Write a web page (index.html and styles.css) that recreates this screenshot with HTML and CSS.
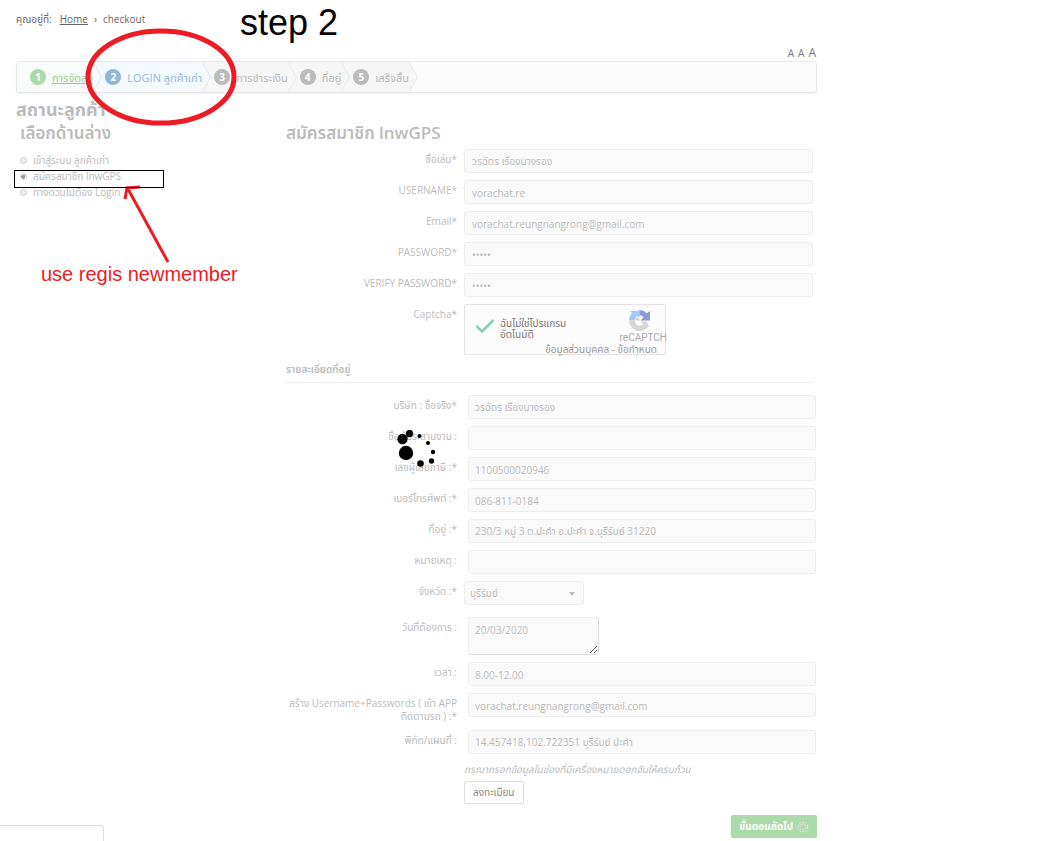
FILE: index.html
```html
<!DOCTYPE html>
<html lang="th">
<head>
  <meta charset="UTF-8" />
  <meta name="viewport" content="width=device-width, initial-scale=1" />
  <title>checkout</title>
  <link rel="stylesheet" href="styles.css">
</head>
<body>
  <div class="page">
    <nav class="breadcrumb">
      <span>คุณอยู่ที่:</span>
      <a href="#">Home</a>
      <span class="sep">›</span>
      <span>checkout</span>
    </nav>

    <div class="font-size">
      <button type="button">A</button>
      <button type="button">A</button>
      <button type="button" class="large">A</button>
    </div>

    <ol class="steps">
      <li class="step done">
        <span class="num">1</span><a href="#">การจัดส่ง</a>
        <svg class="arrow" viewBox="0 0 9 30"><path d="M0 0 8.5 15 0 30" /></svg>
      </li>
      <li class="step active">
        <span class="num">2</span><span>LOGIN ลูกค้าเก่า</span>
        <svg class="arrow" viewBox="0 0 9 30"><path d="M0 0 8.5 15 0 30" /></svg>
      </li>
      <li class="step">
        <span class="num">3</span><span>การชำระเงิน</span>
        <svg class="arrow" viewBox="0 0 9 30"><path d="M0 0 8.5 15 0 30" /></svg>
      </li>
      <li class="step">
        <span class="num">4</span><span>ที่อยู่</span>
        <svg class="arrow" viewBox="0 0 9 30"><path d="M0 0 8.5 15 0 30" /></svg>
      </li>
      <li class="step">
        <span class="num">5</span><span>เสร็จสิ้น</span>
        <svg class="arrow" viewBox="0 0 9 30"><path d="M0 0 8.5 15 0 30" /></svg>
      </li>
    </ol>

    <h1>สถานะลูกค้า</h1>

    <div class="columns">
      <div class="choices">
        <h2>เลือกด้านล่าง</h2>
        <label><input type="radio" name="mode" /> เข้าสู่ระบบ ลูกค้าเก่า</label>
        <label><input type="radio" name="mode" checked /> สมัครสมาชิก lnwGPS</label>
        <label><input type="radio" name="mode" /> ทางด่วนไม่ต้อง Login</label>
      </div>

      <form class="register">
        <h2>สมัครสมาชิก lnwGPS</h2>

        <div class="fields">
          <div class="row">
            <label for="nick">ชื่อเล่น*</label>
            <input type="text" id="nick" value="วรฉัตร เรืองนางรอง" />
          </div>
          <div class="row">
            <label for="user">USERNAME*</label>
            <input type="text" id="user" value="vorachat.re" />
          </div>
          <div class="row">
            <label for="email">Email*</label>
            <input type="text" id="email" value="vorachat.reungnangrong@gmail.com" />
          </div>
          <div class="row">
            <label for="pass">PASSWORD*</label>
            <input type="password" id="pass" value="12345" />
          </div>
          <div class="row">
            <label for="pass2">VERIFY PASSWORD*</label>
            <input type="password" id="pass2" value="12345" />
          </div>
          <div class="row">
            <span class="label">Captcha*</span>
            <div class="captcha">
              <svg class="tick" viewBox="0 0 20 16"><path d="M1.5 8 7 13.5 18.5 2" /></svg>
              <span class="robot">ฉันไม่ใช่โปรแกรมอัตโนมัติ</span>
              <div class="brand">
                <svg viewBox="0 0 20 20">
                  <path fill="#a4c6fb" d="M10 0v7L7 5.5 5 10H0A10 10 0 0 1 3 3L1 1h6z" />
                  <path fill="#8c9ad6" d="M10 0a10 10 0 0 1 7 3l3-2v9h-9l3-3a5 5 0 0 0-4-2z" />
                  <path fill="#d6d6d6" d="M0 10h5.5a5 5 0 0 0 8 4L11 11h6l2 4a10 10 0 0 1-16 2A10 10 0 0 1 0 10z" />
                  <path fill="#d6d6d6" d="m5 10 3-4 3 4z" />
                </svg>
                <span>reCAPTCH</span>
              </div>
              <span class="terms">ข้อมูลส่วนบุคคล - ข้อกำหนด</span>
            </div>
          </div>
        </div>

        <h3>รายละเอียดที่อยู่</h3>

        <div class="fields address">
          <div class="row">
            <label for="company">บริษัท : ชื่อจริง*</label>
            <input type="text" id="company" value="วรฉัตร เรืองนางรอง" />
          </div>
          <div class="row">
            <label for="contact">ชื่อผู้ประสานงาน :</label>
            <input type="text" id="contact" />
          </div>
          <div class="row">
            <label for="tax">เลขผู้เสียภาษี :*</label>
            <input type="text" id="tax" value="1100500020946" />
          </div>
          <div class="row">
            <label for="phone">เบอร์โทรศัพท์ :*</label>
            <input type="text" id="phone" value="086-811-0184" />
          </div>
          <div class="row">
            <label for="addr">ที่อยู่ :*</label>
            <input type="text" id="addr" value="230/3 หมู่ 3 ต.ปะคำ อ.ปะคำ จ.บุรีรัมย์ 31220" />
          </div>
          <div class="row">
            <label for="note">หมายเหตุ :</label>
            <input type="text" id="note" />
          </div>
          <div class="row province">
            <label for="province">จังหวัด :*</label>
            <div class="select">
              <select id="province"><option>บุรีรัมย์</option></select>
            </div>
          </div>
          <div class="row">
            <label for="date">วันที่ต้องการ :</label>
            <textarea id="date">20/03/2020</textarea>
          </div>
          <div class="row">
            <label for="time">เวลา :</label>
            <input type="text" id="time" value="8.00-12.00" />
          </div>
          <div class="row">
            <label for="app">สร้าง Username+Passwords ( เข้า APP ติดตามรถ ) :*</label>
            <input type="text" id="app" value="vorachat.reungnangrong@gmail.com" />
          </div>
          <div class="row">
            <label for="map">พิกัด/แผนที่ :</label>
            <input type="text" id="map" value="14.457418,102.722351 บุรีรัมย์ ปะคำ" />
          </div>
        </div>

        <div class="submit">
          <em>กรุณากรอกข้อมูลในช่องที่มีเครื่องหมายดอกจันให้ครบถ้วน</em>
          <button type="button" class="btn">ลงทะเบียน</button>
        </div>
      </form>
    </div>

    <div class="actions">
      <button type="button" class="next">
        ขั้นตอนถัดไป
        <svg viewBox="0 0 12 12"><circle cx="6" cy="6" r="4.8" /><circle cx="6" cy="6" r="3" /></svg>
      </button>
    </div>

    <!-- loading spinner -->
    <svg class="spinner" viewBox="0 0 40 40">
      <circle cx="9" cy="23" r="7.2" />
      <circle cx="5.5" cy="9" r="5.2" />
      <circle cx="12.5" cy="3.5" r="3.7" />
      <circle cx="22.5" cy="6" r="2" />
      <circle cx="31" cy="13" r="2" />
      <circle cx="36" cy="22" r="2.2" />
      <circle cx="34.5" cy="31" r="2.7" />
      <circle cx="23.5" cy="33.5" r="3.3" />
    </svg>

    <!-- guide marks drawn over the page -->
    <svg class="marks" width="300" height="300" viewBox="0 0 300 300">
      <ellipse cx="161" cy="77" rx="73" ry="46" stroke-width="5" />
      <path d="M168 262 128 189M125 199 127 188 140 187" stroke-width="3" />
      <rect x="14.5" y="170.5" width="149" height="17" />
    </svg>
    <div class="note title">step 2</div>
    <div class="note hint">use regis newmember</div>
  </div>

  <div class="status"></div>
</body>
</html>
```
FILE: styles.css
```css
* {
  box-sizing: border-box;
}
body {
  margin: 0;
  background: #fff;
  color: #bbb;
  font-family: "Open Sans", "Noto Sans", "Noto Sans Thai", sans-serif;
  font-size: 10px;
  line-height: 13px;
}
button, input, select, textarea {
  font: inherit;
  color: inherit;
}
h1, h2, h3 {
  margin: 0;
  font-size: 17px;
  line-height: 24px;
  font-weight: 600;
}
.page {
  position: relative;
  max-width: 817px;
  padding: 13px 0 0 16px;
}

.breadcrumb {
  display: flex;
  align-items: center;
  gap: 6px;
  color: #666;
}
.breadcrumb a {
  color: #666;
  margin-left: 2px;
}
.font-size {
  display: flex;
  justify-content: flex-end;
  align-items: baseline;
  gap: 4px;
  margin-top: 20px;
  padding-right: 1px;
  height: 15px;
}
.font-size button {
  border: 0;
  padding: 0;
  background: none;
  color: #777;
}
.font-size .large {
  font-size: 12px;
}

.steps {
  display: flex;
  margin: 0;
  padding: 0;
  height: 32px;
  list-style: none;
  font-size: 11px;
  border: 1px solid #e8e8e8;
  border-radius: 3px;
  background: #fcfcfc;
  box-shadow: 0 1px 2px #f0f0f0;
}
.step {
  --fill: #f6f6f6;
  position: relative;
  display: flex;
  align-items: center;
  gap: 6px;
  padding-left: 12px;
  background: var(--fill);
  white-space: nowrap;
}
.step.done {
  --fill: #f9fbfb;
  color: #93cf93;
  padding-left: 13px;
}
.step.active {
  --fill: #f4faff;
  color: #92b8d8;
}
.step a {
  color: inherit;
}
.num {
  width: 16px;
  height: 16px;
  font-size: 10px;
  line-height: 16px;
  border-radius: 50%;
  background: #bbb;
  color: #fff;
  font-weight: bold;
  text-align: center;
}
.done .num {
  background: #a9dba9;
}
.active .num {
  background: #92b8d8;
}
.arrow {
  position: absolute;
  z-index: 1;
  left: 100%;
  top: 0;
  width: 9px;
  height: 30px;
  fill: var(--fill);
  stroke: #e8e8e8;
}

h1 {
  margin-top: 4px;
  font-size: 18px;
  font-weight: 700;
}
.columns {
  display: grid;
  grid-template-columns: 270px 1fr;
}
.choices h2 {
  margin: 0 0 7px 4px;
}
.choices label {
  display: flex;
  align-items: center;
  gap: 6px;
  height: 16px;
  padding-left: 4px;
}
.choices input {
  appearance: none;
  width: 7px;
  height: 7px;
  margin: 0;
  border: 1px solid #ccc;
  border-radius: 50%;
  background: #eee;
}
.choices input:checked {
  background: radial-gradient(#999 0 2px, #eee 2px);
}

.fields {
  display: flex;
  flex-direction: column;
  gap: 7px;
  padding: 4px 4px 0 0;
}
.row {
  display: grid;
  grid-template-columns: 171px 1fr;
  column-gap: 7px;
  align-items: start;
}
.row > label, .label {
  padding-top: 4px;
  text-align: right;
}
.row input, select, textarea {
  width: 100%;
  height: 24px;
  padding: 1px 7px 0;
  border: 1px solid #eee;
  border-radius: 3px;
  background: #fafafa;
}
.captcha {
  position: relative;
  display: grid;
  grid-template-columns: 20px 80px;
  gap: 5px;
  width: 202px;
  height: 51px;
  padding: 13px 10px;
  border: 1px solid #e4e4e4;
  border-radius: 2px;
  background: #fcfcfc;
  color: #777;
  line-height: 11px;
}
.tick {
  width: 20px;
  height: 16px;
  fill: none;
  stroke: #86d0ae;
  stroke-width: 2.5;
}
.brand {
  position: absolute;
  right: -2px;
  top: 5px;
  display: flex;
  flex-direction: column;
  align-items: center;
  gap: 1px;
  color: #aaa;
  font-family: Roboto, sans-serif;
}
.brand svg {
  width: 21px;
  height: 21px;
  margin-right: 8px;
}
.terms {
  position: absolute;
  right: 8px;
  bottom: -1px;
  color: #999;
  white-space: nowrap;
}

h3 {
  margin: 2px 4px 0 0;
  padding-bottom: 1px;
  border-bottom: 1px solid #eee;
  font-size: 10px;
}
.address {
  padding: 12px 1px 0 0;
}
.address .row > input, .address textarea {
  justify-self: end;
  width: calc(100% - 4px);
  padding-left: 6px;
}
.select {
  position: relative;
  width: 120px;
}
.select::after {
  content: "";
  position: absolute;
  right: 9px;
  top: 11px;
  border: 3px solid transparent;
  border-top: 4px solid #bbb;
}
select {
  appearance: none;
  padding: 0 5px;
}
.province {
  padding-bottom: 5px;
}
.address textarea {
  justify-self: start;
  width: 131px;
  height: 38px;
  margin-left: 4px;
  padding-top: 6px;
  border-right-color: #ddd;
  border-bottom-color: #ddd;
}
.submit {
  display: flex;
  flex-direction: column;
  align-items: flex-start;
  gap: 5px;
  padding: 9px 0 0 178px;
}
.btn {
  height: 23px;
  padding: 0 8px;
  border: 1px solid #ddd;
  border-radius: 2px;
  background: #fff;
  color: #888;
}
.actions {
  display: flex;
  justify-content: flex-end;
  margin-top: 11px;
}
.next {
  display: flex;
  align-items: center;
  gap: 4px;
  height: 23px;
  padding: 0 8px;
  border: 0;
  border-radius: 2px;
  background: #abdbab;
  color: #fff;
  font-weight: bold;
}
.next svg {
  width: 12px;
  height: 12px;
  fill: none;
  stroke: #f0e6f0;
  stroke-dasharray: 2 1;
}

.spinner {
  position: absolute;
  left: 397px;
  top: 430px;
  width: 40px;
  height: 40px;
}
.marks {
  position: absolute;
  left: 0;
  top: 0;
  z-index: 2;
  fill: none;
  stroke: #ed1c24;
  pointer-events: none;
}
.marks rect {
  stroke: #000;
}
.note {
  position: absolute;
  z-index: 2;
  font-family: "Liberation Sans", Arial, sans-serif;
  white-space: nowrap;
}
.title {
  left: 240px;
  top: 3px;
  color: #000;
  font-size: 36px;
  line-height: 40px;
}
.hint {
  left: 41px;
  top: 262px;
  color: #ed1c24;
  font-size: 20px;
  line-height: 24px;
}
.status {
  position: fixed;
  left: 0;
  bottom: 0;
  width: 104px;
  height: 16px;
  border: 1px solid #ddd;
  border-width: 1px 1px 0 0;
  border-top-right-radius: 4px;
}
```
